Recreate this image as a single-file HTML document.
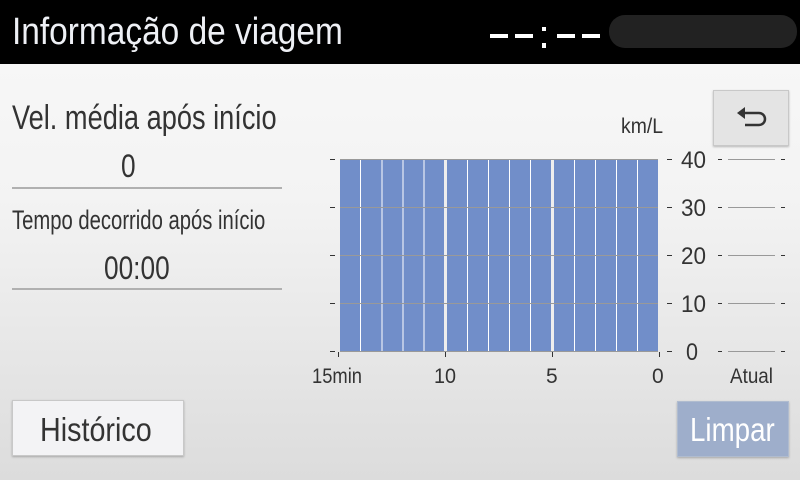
<!DOCTYPE html>
<html><head><meta charset="utf-8"><style>
*{margin:0;padding:0;box-sizing:border-box}
body{width:800px;height:480px;overflow:hidden;font-family:"Liberation Sans","DejaVu Sans",sans-serif;background:linear-gradient(#f7f7f7 64px,#f3f3f3 200px,#dcdcdc 480px);position:relative;color:#333}
.t{position:absolute;white-space:nowrap;transform-origin:left top;transform:scaleX(0.82)}
.hdr{position:absolute;left:0;top:0;width:800px;height:64px;background:#000}
.ln{position:absolute;height:2px;background:#b0b0b0}
.btn{position:absolute;border:1px solid #c8c8c8;box-shadow:0 1px 2px rgba(0,0,0,.25)}
.d{position:absolute;background:#fff}
</style></head><body>
<div class="hdr"></div>
<div class="t" style="left:12px;top:11px;font-size:38px;color:#eef0f5;transform:scaleX(0.88)">Informação de viagem</div>
<div class="d" style="left:490px;top:34px;width:18px;height:4px"></div>
<div class="d" style="left:515px;top:34px;width:18px;height:4px"></div>
<div class="d" style="left:542px;top:27px;width:4px;height:4px"></div>
<div class="d" style="left:542px;top:43px;width:4px;height:5px"></div>
<div class="d" style="left:557px;top:34px;width:18px;height:4px"></div>
<div class="d" style="left:582px;top:34px;width:18px;height:4px"></div>
<div style="position:absolute;left:609px;top:15px;width:188px;height:33px;border-radius:16px;background:#222"></div>

<div class="t" style="left:12px;top:99px;font-size:34px;transform:scaleX(0.8)">Vel. média após início</div>
<div class="t" style="left:121px;top:148px;font-size:32px">0</div>
<div class="ln" style="left:12px;top:187px;width:270px"></div>
<div class="t" style="left:12px;top:205px;font-size:27px;transform:scaleX(0.75)">Tempo decorrido após início</div>
<div class="t" style="left:104px;top:250px;font-size:32px">00:00</div>
<div class="ln" style="left:12px;top:288px;width:270px"></div>

<svg style="position:absolute;left:0;top:0" width="800" height="480">
<rect x="340" y="159" width="318" height="192" fill="#718ec9"/>
<g stroke="#fff" stroke-width="1">
<line x1="360.5" y1="159" x2="360.5" y2="351"/><line x1="382" y1="159" x2="382" y2="351"/><line x1="403" y1="159" x2="403" y2="351"/><line x1="424" y1="159" x2="424" y2="351"/>
<line x1="467.5" y1="159" x2="467.5" y2="351"/><line x1="488.5" y1="159" x2="488.5" y2="351"/><line x1="509.5" y1="159" x2="509.5" y2="351"/><line x1="530.5" y1="159" x2="530.5" y2="351"/>
<line x1="574.5" y1="159" x2="574.5" y2="351"/><line x1="595.5" y1="159" x2="595.5" y2="351"/><line x1="616.5" y1="159" x2="616.5" y2="351"/><line x1="637.5" y1="159" x2="637.5" y2="351"/>
</g>
<g stroke="#eee" stroke-width="3"><line x1="445.5" y1="159" x2="445.5" y2="351"/><line x1="552.5" y1="159" x2="552.5" y2="351"/></g>
<g stroke="#999" stroke-width="1">
<line x1="340" y1="159.5" x2="658" y2="159.5"/><line x1="340" y1="207.5" x2="658" y2="207.5"/><line x1="340" y1="255.5" x2="658" y2="255.5"/><line x1="340" y1="303.5" x2="658" y2="303.5"/><line x1="340" y1="351.5" x2="658" y2="351.5"/>
<line x1="728" y1="159.5" x2="775" y2="159.5"/><line x1="728" y1="207.5" x2="775" y2="207.5"/><line x1="728" y1="255.5" x2="775" y2="255.5"/><line x1="728" y1="303.5" x2="775" y2="303.5"/><line x1="728" y1="351.5" x2="775" y2="351.5"/>
</g>
<g stroke="#333" stroke-width="1">
<path d="M330 159.5h5M330 207.5h5M330 255.5h5M330 303.5h5M330 351.5h5M667 159.5h5M667 207.5h5M667 255.5h5M667 303.5h5M667 351.5h5M718 159.5h4M718 207.5h4M718 255.5h4M718 303.5h4M718 351.5h4M781 159.5h4M781 207.5h4M781 255.5h4M781 303.5h4M781 351.5h4M338.5 352v5M445.5 352v5M552.5 352v5M659.5 352v5"/>
</g>
<g font-family="Liberation Sans,sans-serif" font-size="24" fill="#333">
<text x="681" y="168" textLength="25" lengthAdjust="spacingAndGlyphs">40</text><text x="681" y="216" textLength="25" lengthAdjust="spacingAndGlyphs">30</text><text x="681" y="264" textLength="25" lengthAdjust="spacingAndGlyphs">20</text><text x="681" y="312" textLength="25" lengthAdjust="spacingAndGlyphs">10</text><text x="686" y="360" textLength="12" lengthAdjust="spacingAndGlyphs">0</text>
</g>
<g font-family="Liberation Sans,sans-serif" font-size="21" fill="#333">
<text x="312" y="383" textLength="50" lengthAdjust="spacingAndGlyphs">15min</text><text x="434" y="383" textLength="22" lengthAdjust="spacingAndGlyphs">10</text><text x="546" y="383">5</text><text x="652" y="383">0</text><text x="730" y="383" textLength="43" lengthAdjust="spacingAndGlyphs">Atual</text><text x="621" y="133" textLength="42" lengthAdjust="spacingAndGlyphs">km/L</text>
</g>
</svg>

<div class="btn" style="left:713px;top:90px;width:76px;height:56px;background:#e4e4e4"></div>
<svg style="position:absolute;left:735px;top:104px" width="36" height="26"><path d="M4 9h20a6 6 0 0 1 0 12H10" fill="none" stroke="#333" stroke-width="2.5"/><path d="M2 9l8-6v12z" fill="#333"/></svg>

<div class="btn" style="left:12px;top:400px;width:172px;height:56px;background:#f3f3f5"></div>
<div class="t" style="left:40px;top:411px;font-size:33px;transform:scaleX(0.87)">Histórico</div>
<div class="btn" style="left:677px;top:401px;width:112px;height:56px;background:#9eaecb;border-color:#b0bccf"></div>
<div class="t" style="left:690px;top:411px;font-size:33px;color:#fff;transform:scaleX(0.84)">Limpar</div>
</body></html>
